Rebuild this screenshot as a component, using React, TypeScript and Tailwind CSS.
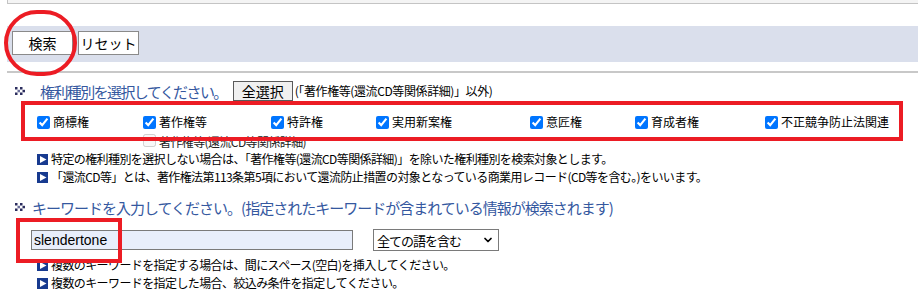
import { ChevronDown } from 'lucide-react'

const font = { fontFamily: '"Noto Sans CJK JP", "Liberation Sans", sans-serif' }

function SectionMark() {
  return (
    <svg width="10" height="8" viewBox="0 0 10 8" className="shrink-0">
      <rect x="0" y="0" width="2.5" height="2.5" fill="#2b2d5e" />
      <rect x="5" y="0" width="2.5" height="2.5" fill="#2b2d5e" />
      <rect x="2.5" y="2.8" width="2.5" height="2.5" fill="#6b6f9a" />
      <rect x="7.5" y="2.8" width="2.5" height="2.5" fill="#2b2d5e" />
      <rect x="0" y="5.5" width="2.5" height="2.5" fill="#2b2d5e" />
      <rect x="5" y="5.5" width="2.5" height="2.5" fill="#2b2d5e" />
    </svg>
  )
}

function Bullet() {
  return (
    <svg width="11" height="11" viewBox="0 0 11 11" className="shrink-0">
      <rect x="0" y="0" width="11" height="11" fill="#173a8f" />
      <polygon points="3,2 9.5,5.5 3,9" fill="#ffffff" />
    </svg>
  )
}

function Note({ children }: { children: React.ReactNode }) {
  return (
    <div className="flex items-center gap-[3px] h-[18px] pl-[37px] text-[12px] tracking-[-0.6px] leading-[18px] text-black">
      <Bullet />
      <span>{children}</span>
    </div>
  )
}

const kinds = [
  { label: '商標権', w: 'w-[106px]' },
  { label: '著作権等', w: 'w-[128px]' },
  { label: '特許権', w: 'w-[105px]' },
  { label: '実用新案権', w: 'w-[154px]' },
  { label: '意匠権', w: 'w-[105px]' },
  { label: '育成者権', w: 'w-[130px]' },
  { label: '不正競争防止法関連', w: 'w-[130px]' },
]

export default function App() {
  return (
    <div className="relative w-[918px] h-[308px] bg-white overflow-hidden" style={font}>
      {/* top panel edge */}
      <div className="ml-[7px] h-[4px] border-l border-b border-[#c4c4c4] bg-[#f4f4f4]" />

      {/* button band */}
      <div className="ml-[7px] mt-[22px] h-[36px] bg-[#dadfec] flex gap-[5px] pl-[5px] pt-[5px]">
        <button className="w-[61px] h-[24px] bg-white border border-[#8a8a8a] text-[14px] leading-none text-black">検索</button>
        <button className="w-[61px] h-[24px] bg-white border border-[#8a8a8a] text-[14px] leading-none text-black">リセット</button>
      </div>

      <div className="ml-[7px] mt-[9px] h-[2px] bg-[#c8c8c8]" />

      {/* section 1 */}
      <div className="mt-[8px] h-[20px] flex items-center">
        <div className="pl-[15px] w-[40px]">
          <SectionMark />
        </div>
        <span className="text-[15px] tracking-[-1.6px] leading-none text-[#35589f]">権利種別を選択してください。</span>
        <button className="ml-[6px] w-[60px] h-[20px] bg-[#f0f0f0] border border-[#5a5a5a] text-[14px] leading-none text-black">全選択</button>
        <span className="ml-[2px] text-[12px] tracking-[-0.4px] leading-none text-black">(「著作権等(還流CD等関係詳細)」以外)</span>
      </div>

      <div className="mt-[12px] pl-[37px]">
        <div className="flex h-[18px] items-center">
          {kinds.map((k) => (
            <label key={k.label} className={`${k.w} shrink-0 flex items-center gap-[3px] text-[12px] leading-none text-black`}>
              <input type="checkbox" defaultChecked className="m-0 w-[13px] h-[13px] accent-[#0075ff]" />
              <span>{k.label}</span>
            </label>
          ))}
        </div>
        <div className="flex h-[18px] items-center pl-[106px]">
          <label className="flex items-center gap-[3px] text-[12px] tracking-[-0.6px] leading-none text-[#222]">
            <input type="checkbox" disabled className="m-0 w-[13px] h-[13px]" />
            <span className="mt-[3px]">著作権等(還流CD等関係詳細)</span>
          </label>
        </div>
      </div>

      <div className="mt-[1px]">
        <Note>特定の権利種別を選択しない場合は、「著作権等(還流CD等関係詳細)」を除いた権利種別を検索対象とします。</Note>
        <Note>「還流CD等」とは、著作権法第113条第5項において還流防止措置の対象となっている商業用レコード(CD等を含む。)をいいます。</Note>
      </div>

      {/* section 2 */}
      <div className="mt-[11px] h-[20px] flex items-center">
        <div className="pl-[15px] w-[32px]">
          <SectionMark />
        </div>
        <span className="text-[15px] tracking-[-1px] leading-none text-[#35589f]">
          キーワードを入力してください。(指定されたキーワードが含まれている情報が検索されます)
        </span>
      </div>

      <div className="mt-[12px] h-[22px] flex items-center pl-[31px]">
        <div className="w-[322px] h-[20px] bg-[#e8eefb] border border-[#7a7a7a] flex items-center px-[2px]">
          <span className="text-[14px] leading-none text-black" style={{ fontFamily: '"Liberation Sans", Arial, sans-serif' }}>slendertone</span>
        </div>
        <div className="ml-[20px] w-[126px] h-[22px] bg-white border border-[#7a7a7a] flex items-center justify-between pl-[3px] pr-[4px]">
          <span className="text-[13px] tracking-[-1px] leading-none text-black">全ての語を含む</span>
          <ChevronDown size={12} strokeWidth={3.5} className="text-black" />
        </div>
      </div>

      <div className="mt-[5px]">
        <Note>複数のキーワードを指定する場合は、間にスペース(空白)を挿入してください。</Note>
        <Note>複数のキーワードを指定した場合、絞込み条件を指定してください。</Note>
      </div>

      {/* red annotations */}
      <div className="absolute left-[4px] top-[10px] w-[73px] h-[66px] rounded-full border-[4px] border-[#ec1c24]" />
      <div className="absolute left-[21px] top-[101px] w-[882px] h-[40px] border-[4px] border-[#ec1c24]" />
      <div className="absolute left-[16px] top-[218px] w-[106px] h-[45px] border-[4px] border-[#ec1c24]" />
    </div>
  )
}
